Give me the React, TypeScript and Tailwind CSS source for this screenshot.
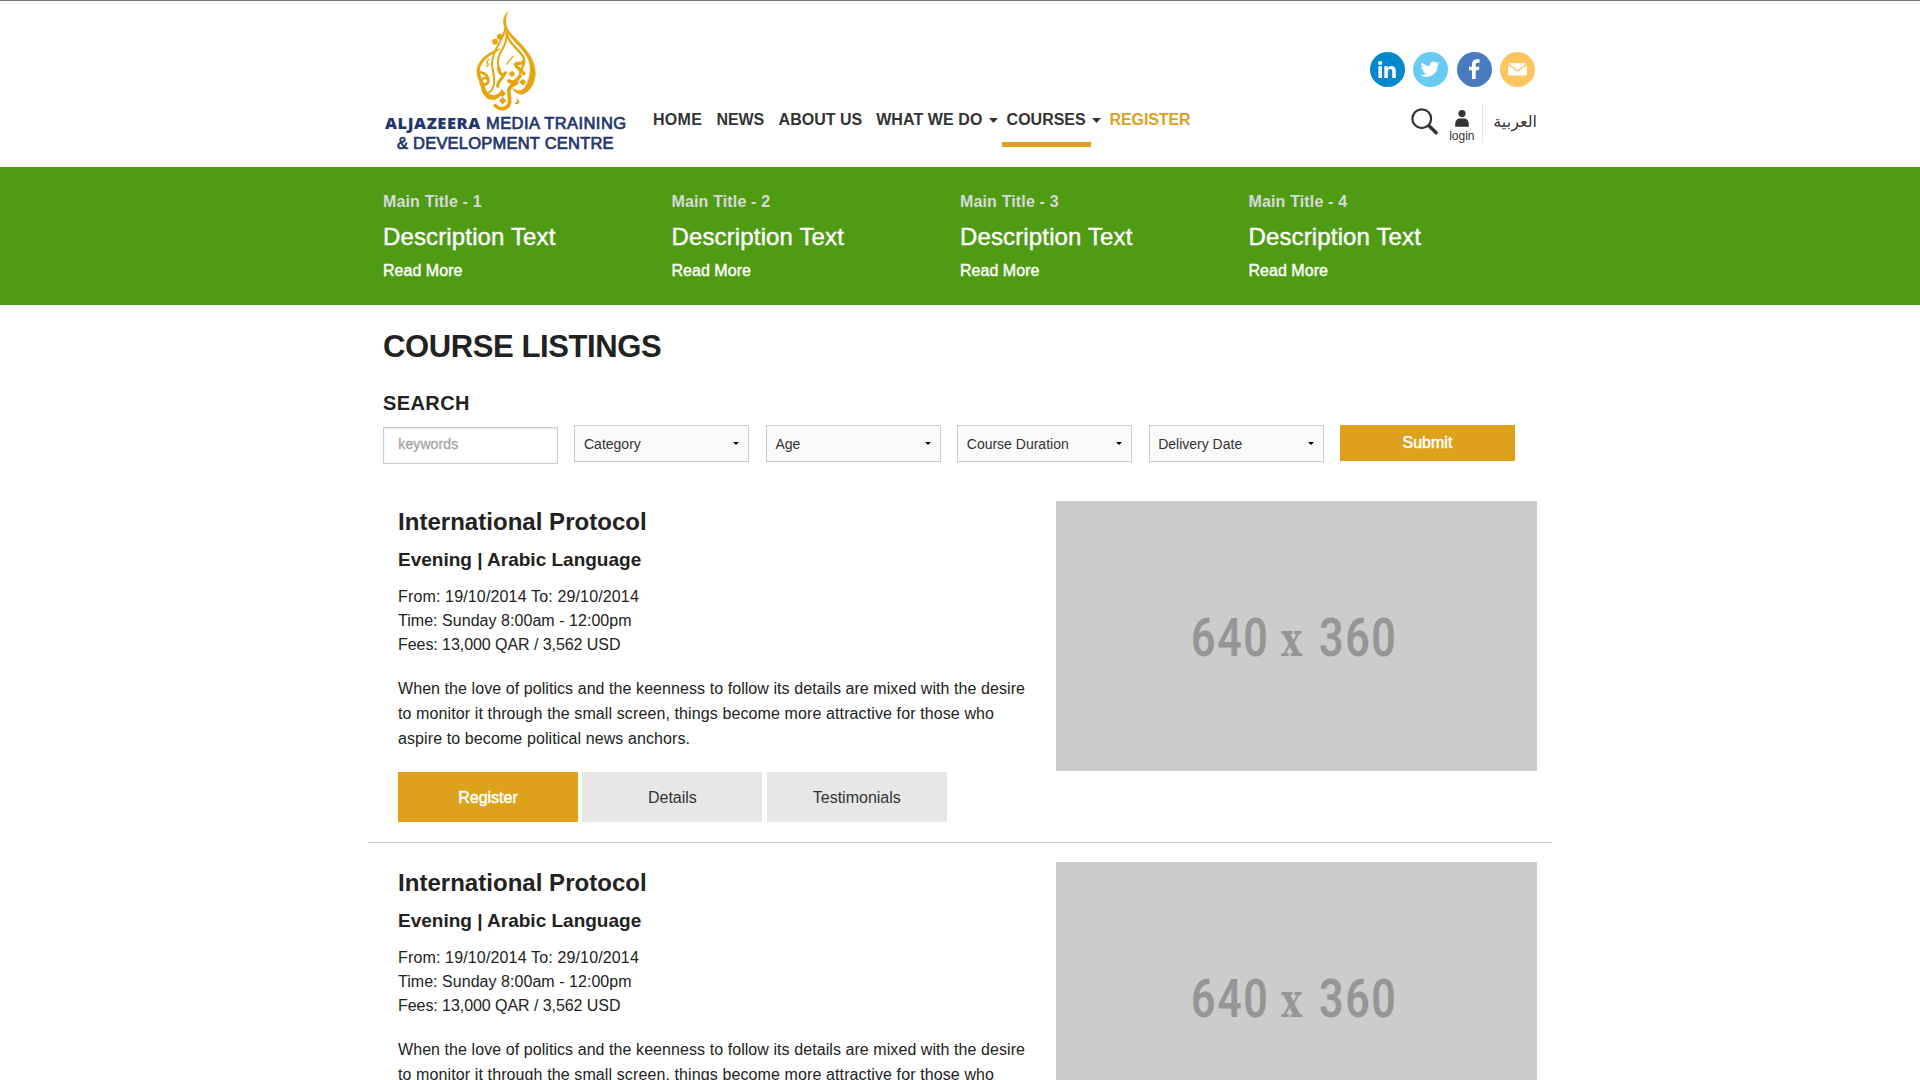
import React from 'react';

const titles = ['Main Title - 1', 'Main Title - 2', 'Main Title - 3', 'Main Title - 4'];

function Flame() {
  return (
    <svg viewBox="0 0 270 330" className="ml-[75px] h-[110px] w-[90px]" fill="#e5a50e">
      {/* outer right flame */}
      <path stroke="#e5a50e" strokeWidth="1.5" d="M145 20C134 28 128 42 131 57C134 72 141 82 152 96C170 118 194 138 205 163C215 190 211 222 195 246C187 257 176 260 162 252L158 250C163 262 176 271 192 266C212 258 226 230 226 204C225 170 208 146 190 125C172 104 150 88 141 68C135 52 136 34 145 20Z" />
      {/* left contour, thickening toward the foot */}
      <path stroke="#e5a50e" strokeWidth="1.5" d="M119 131C92 138 56 160 51 193C49 216 60 228 63 246C67 268 80 287 103 284C118 281 125 268 127 252C120 264 111 271 98 271C84 269 77 258 74 243C71 227 58 214 59 195C62 167 92 147 119 134Z" />
      <g fill="none" stroke="#e5a50e" strokeLinecap="round" strokeLinejoin="round">
        {/* left loop */}
        <path d="M62 202C76 203 86 216 85 228C83 239 70 242 62 236" strokeWidth="8.5" />
        <path d="M82 222C76 215 65 220 64 230" strokeWidth="7" />
        {/* long inner stems */}
        <path d="M136 68C135 84 126 98 119 112C104 138 96 155 96 177C97 199 108 222 100 246C97 255 92 260 86 263" strokeWidth="6" />
        <path d="M139 82C144 104 132 124 122 142C110 164 111 180 121 196" strokeWidth="6" />
        <path d="M115 190C118 206 127 216 137 203M133 208C126 222 112 230 113 244" strokeWidth="9" />
        {/* right inner letters */}
        <path d="M141 88C146 118 178 132 191 158C196 174 188 188 180 203" strokeWidth="7" />
        <path d="M166 178C172 172 182 180 190 170M166 178C170 190 184 194 192 206" strokeWidth="10" />
        <path d="M147 228C156 236 166 234 180 212M147 228L170 234C156 240 146 246 146 258C149 280 153 298 140 307C129 315 113 310 106 302" strokeWidth="11" />
        {/* small marks */}
        <path d="M159 155C153 162 144 168 140 178M87 163C79 166 78 175 86 178L80 184" strokeWidth="4" />
      </g>
      <circle cx="105" cy="110" r="8.5" />
      <circle cx="120" cy="95" r="9" />
      <path d="M156 197L166 207L156 217L146 207ZM127 255L138 266L127 277L116 266ZM128 276L139 287L128 298L117 287ZM188 221L199 231L189 242L178 231Z" />
      <path d="M169 277C172 287 183 285 176 296C172 299 166 298 163 295C171 294 172 289 169 277Z" />
    </svg>
  );
}

function Logo() {
  return (
    <div className="ml-[2px] w-[244px] pt-[4px] text-[#22356f]">
      <Flame />
      <div className="-mt-[3px] flex h-[21px] items-baseline whitespace-nowrap text-[16.5px] leading-[21px]">
        <span className="w-[101px] font-['Open_Sans'] text-[16.5px] font-extrabold tracking-[0.57px]">ALJAZEERA</span>
        <span className="tracking-[0.43px] [-webkit-text-stroke:0.7px_#22356f]">MEDIA TRAINING</span>
      </div>
      <div className="ml-[12px] whitespace-nowrap text-[16.5px] leading-[21px] tracking-[0.22px] [-webkit-text-stroke:0.7px_#22356f]">
        &amp; DEVELOPMENT CENTRE
      </div>
    </div>
  );
}

function NavCaret() {
  return (
    <svg viewBox="0 0 9 5" className="h-[5px] w-[9px]" fill="#333">
      <path d="M0 0H9L4.5 5Z" />
    </svg>
  );
}

function Nav() {
  return (
    <nav className="ml-[24px] mt-[107px] flex h-6 items-center whitespace-nowrap text-base font-bold leading-6 text-[#333]">
      <span className="w-[63.6px] tracking-[0.3px]">HOME</span>
      <span className="w-[62px] tracking-[-0.1px]">NEWS</span>
      <span className="w-[97.6px]">ABOUT US</span>
      <span className="w-[112.4px] tracking-[0.08px]">WHAT WE DO</span>
      <NavCaret />
      <span className="relative ml-[9px] w-[85px]">
        COURSES
        <span className="absolute -left-[5px] top-[34px] h-[5px] w-[89px] bg-[#dda11b]" />
      </span>
      <NavCaret />
      <span className="ml-[9px] tracking-[-0.12px] text-[#dda11b]">REGISTER</span>
    </nav>
  );
}

function Social() {
  return (
    <div className="flex gap-[8.3px]">
      <svg viewBox="0 0 35 35" className="size-[35px]">
        <circle cx="17.5" cy="17.5" r="17.5" fill="#0288cc" />
        <g fill="#fff">
          <circle cx="10.2" cy="11" r="2.1" />
          <path d="M8.4 14.3H12V26H8.4ZM14.3 14.3H17.7V16C18.5 14.7 19.7 14 21.3 14C24.6 14 25.8 16 25.8 19.3V26H22.2V20C22.2 18.2 21.7 17.1 20.2 17.1C18.6 17.1 17.9 18.2 17.9 20V26H14.3Z" />
        </g>
      </svg>
      <svg viewBox="0 0 35 35" className="size-[35px]">
        <circle cx="17.5" cy="17.5" r="17.5" fill="#69cbf1" />
        <path transform="translate(7.6 7.7) scale(.79)" fill="#fff" d="M23.95 4.57a10 10 0 0 1-2.82.78 4.96 4.96 0 0 0 2.16-2.73c-.95.56-2 .96-3.13 1.18a4.92 4.92 0 0 0-8.38 4.48C7.69 8.1 4.07 6.13 1.64 3.16a4.82 4.82 0 0 0-.67 2.48c0 1.71.87 3.21 2.19 4.1a4.9 4.9 0 0 1-2.23-.62v.06a4.92 4.92 0 0 0 3.95 4.83 5 5 0 0 1-2.21.08 4.94 4.94 0 0 0 4.6 3.42A9.87 9.87 0 0 1 0 19.54a14 14 0 0 0 7.55 2.21c9.05 0 14-7.5 14-13.98 0-.21 0-.42-.02-.63a9.94 9.94 0 0 0 2.46-2.55z" />
      </svg>
      <svg viewBox="0 0 35 35" className="size-[35px]">
        <circle cx="17.5" cy="17.5" r="17.5" fill="#497cbf" />
        <path fill="#fff" d="M15 27V18.2H12V14.8H15V12.1C15 8.9 16.9 7.2 19.8 7.2C21.1 7.2 22.2 7.3 22.6 7.4V10.7H20.6C19 10.7 18.7 11.5 18.7 12.6V14.8H22.4L21.9 18.2H18.7V27Z" />
      </svg>
      <svg viewBox="0 0 35 35" className="size-[35px]">
        <circle cx="17.5" cy="17.5" r="17.5" fill="#fdc55f" />
        <path fill="#fff" d="M8.2 11.2H26.8L17.5 18.2ZM8.2 13L17.5 20L26.8 13V23.4H8.2Z" />
      </svg>
    </div>
  );
}

function Tools() {
  return (
    <div className="mt-[17px] flex h-[39px]">
      <svg viewBox="0 0 28 28" className="ml-[41px] mt-[3.5px] size-7" fill="none" stroke="#333">
        <circle cx="10.8" cy="10.7" r="9.4" strokeWidth="2.2" />
        <path d="M17.5 17.2L26.3 25.8" strokeWidth="3.4" />
      </svg>
      <div className="ml-[10px] flex w-[26px] flex-col items-center">
        <svg viewBox="0 0 16 19" className="mt-[5.5px] h-[19px] w-4" fill="#333">
          <circle cx="8" cy="4" r="4" />
          <path d="M.4 18.7V16C.4 11.8 3 9.6 5.5 9.6H10.5C13 9.6 15.6 11.8 15.6 16V18.7Z" />
        </svg>
        <span className="mt-[2.5px] text-xs leading-[14px] text-[#333]">login</span>
      </div>
      <div className="ml-[7px] h-[39px] w-px bg-[#e3e3e3]" />
      <span dir="rtl" lang="ar" className="ml-[10.5px] mt-[6px] whitespace-nowrap font-['DejaVu_Sans'] text-base leading-6 text-[#333]">
        العربية
      </span>
    </div>
  );
}

function SelectBox({ label }: { label: string }) {
  return (
    <div className="flex h-[37px] w-[175px] items-center justify-between whitespace-nowrap border border-[#ccc] bg-[#fafafa] pl-[8.6px] pr-[9px] text-sm text-[#333]">
      <span>{label}</span>
      <svg viewBox="0 0 6 3" className="h-[3px] w-[6px]" fill="#000">
        <path d="M0 0H6L3 3Z" />
      </svg>
    </div>
  );
}

function SearchForm() {
  return (
    <form className="mt-[8px] flex h-[39px] items-start gap-[16.4px]">
      <div className="mt-[2px] flex h-[37px] w-[175px] items-center border border-[#ccc] pb-1 pl-[14.3px] text-sm tracking-[0.1px] text-[#a4a4a4] shadow-[inset_0_1px_2px_rgba(0,0,0,0.1)] [-webkit-text-stroke:0.3px_#a4a4a4]">
        keywords
      </div>
      <SelectBox label="Category" />
      <SelectBox label="Age" />
      <SelectBox label="Course Duration" />
      <SelectBox label="Delivery Date" />
      <button type="button" className="h-9 w-[175px] bg-[#dda11b] text-base text-white [-webkit-text-stroke:0.5px_#fff]">
        Submit
      </button>
    </form>
  );
}

function Placeholder() {
  return (
    <div className="flex h-[270px] w-[481px] items-center justify-center bg-[#ccc] text-[#969696]">
      <div className="-ml-[8px] mt-[5px] flex items-baseline font-[Roboto] text-[53px] font-semibold leading-none">
        <span className="w-[90px] origin-left scale-x-[0.81] tracking-[2px]">640</span>
        <span className="w-[38px] origin-left font-['DejaVu_Serif'] text-[49px] font-bold [transform:scaleX(0.72)]">x</span>
        <span className="w-[76px] origin-left scale-x-[0.81] tracking-[2px]">360</span>
      </div>
    </div>
  );
}

function CourseCard() {
  return (
    <article className="flex h-[361px] items-start justify-between border-b border-[#c8c8c8] pl-[30px] pr-[15px] pt-[19px]">
      <div className="whitespace-nowrap pt-[5px] text-base text-[#222]">
        <h3 className="text-2xl font-bold leading-8 tracking-[0.03px]">International Protocol</h3>
        <h4 className="mt-[10px] text-[19px] font-bold leading-6">Evening | Arabic Language</h4>
        <div className="mt-[13px] leading-6">
          <p className="tracking-[0.15px]">From: 19/10/2014 To: 29/10/2014</p>
          <p className="tracking-[0.04px]">Time: Sunday 8:00am - 12:00pm</p>
          <p className="tracking-[-0.06px]">Fees: 13,000 QAR / 3,562 USD</p>
        </div>
        <p className="mt-[19px] leading-[25px]">
          <span className="tracking-[0.07px]">When the love of politics and the keenness to follow its details are mixed with the desire</span>
          <br />
          <span className="tracking-[0.11px]">to monitor it through the small screen, things become more attractive for those who</span>
          <br />
          <span className="tracking-[0.1px]">aspire to become political news anchors.</span>
        </p>
        <div className="mt-[21px] flex gap-[4.4px]">
          <button type="button" className="h-[50px] w-[180px] bg-[#dda11b] pt-px text-white [-webkit-text-stroke:0.5px_#fff]">Register</button>
          <button type="button" className="h-[50px] w-[180px] bg-[#e7e7e7] pt-px text-[#333]">Details</button>
          <button type="button" className="h-[50px] w-[180px] bg-[#e7e7e7] pt-px text-[#333]">Testimonials</button>
        </div>
      </div>
      <Placeholder />
    </article>
  );
}

export default function App() {
  return (
    <div className="h-[1080px] w-full overflow-hidden bg-white font-['Liberation_Sans',Arial,sans-serif]">
      <header className="h-[167px] border-t border-[#777]">
        <div className="mx-auto flex w-[1154px] items-start">
          <Logo />
          <Nav />
          <div className="ml-auto w-[167px] pt-[51px]">
            <Social />
            <Tools />
          </div>
        </div>
      </header>

      <section className="h-[138px] bg-[#4f9c14] pt-[23px]">
        <div className="mx-auto grid w-[1154px] grid-cols-4">
          {titles.map((title) => (
            <div key={title} className="whitespace-nowrap text-base leading-6 text-white">
              <p className="font-bold tracking-[0.15px] text-[#d9d9d9]">{title}</p>
              <p className="mt-[7px] text-2xl leading-8 tracking-[0.14px] [-webkit-text-stroke:0.4px_#fff]">Description Text</p>
              <p className="mt-[6px] tracking-[0.03px] [-webkit-text-stroke:0.4px_#fff]">Read More</p>
            </div>
          ))}
        </div>
      </section>

      <main className="mx-auto w-[1154px] text-[#222]">
        <h1 className="mt-[22px] text-[31px] font-bold leading-10 tracking-[-0.4px]">COURSE LISTINGS</h1>
        <h2 className="mt-[22px] text-xl font-bold leading-7 tracking-[0.4px]">SEARCH</h2>
        <SearchForm />
        <div className="-mx-[15px] mt-[18px]">
          <CourseCard />
          <CourseCard />
        </div>
      </main>
    </div>
  );
}
